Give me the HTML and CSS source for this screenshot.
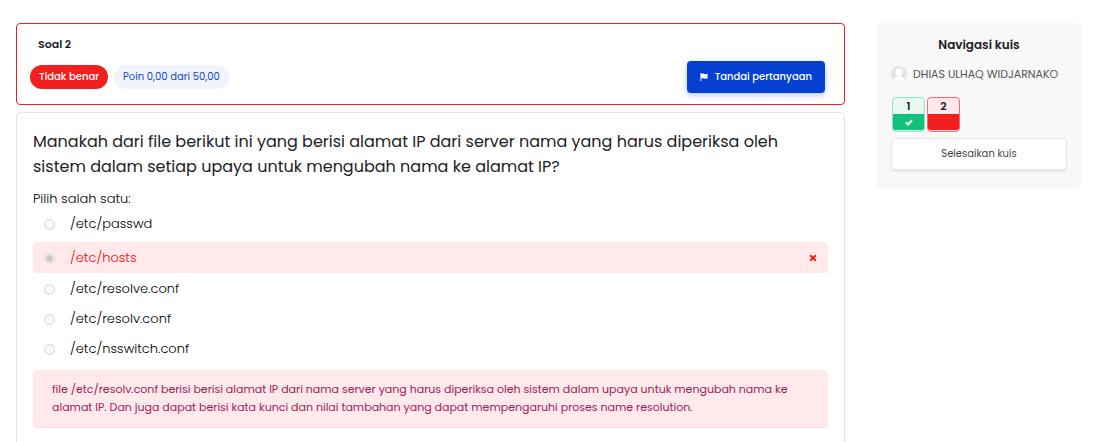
FILE: index.html
```html
<!DOCTYPE html>
<html lang="id">
<head>
<meta charset="utf-8">
<meta name="viewport" content="width=device-width, initial-scale=1">
<title>Soal 2</title>
<link rel="stylesheet" href="styles.css">
</head>
<body>
<div class="page">
  <main class="question">
    <section class="info">
      <h1 class="info-title">Soal 2</h1>
      <div class="info-row">
        <span class="badge badge-wrong">Tidak benar</span>
        <span class="badge badge-grade">Poin 0,00 dari 50,00</span>
        <button class="flag-button" type="button">
          <svg class="flag-icon" viewBox="0 0 9 9" aria-hidden="true"><path d="M.5 0h1v1C3 .2 4 .6 5 1s2 .4 3.500-.3V6C7 6.700 6 6.600 5 6.200S3 5.500 1.500 6.300V9h-1z"/></svg>
          <span>Tandai pertanyaan</span>
        </button>
      </div>
    </section>
    <section class="content">
      <p class="question-text">Manakah dari file berikut ini yang berisi alamat IP dari server nama yang harus diperiksa oleh sistem dalam setiap upaya untuk mengubah nama ke alamat IP?</p>
      <fieldset class="answers">
        <legend class="prompt">Pilih salah satu:</legend>
        <div class="answer"><input class="radio" type="radio" name="answer" id="a1" disabled><label for="a1">/etc/passwd</label></div>
        <div class="answer answer-wrong"><input class="radio" type="radio" name="answer" id="a2" checked disabled><label for="a2">/etc/hosts</label>
          <svg class="cross-icon" viewBox="0 0 8 8" role="img" aria-label="Salah"><path d="M1.200 1.200l5.600 5.600M6.800 1.200L1.200 6.800"/></svg></div>
        <div class="answer"><input class="radio" type="radio" name="answer" id="a3" disabled><label for="a3">/etc/resolve.conf</label></div>
        <div class="answer"><input class="radio" type="radio" name="answer" id="a4" disabled><label for="a4">/etc/resolv.conf</label></div>
        <div class="answer"><input class="radio" type="radio" name="answer" id="a5" disabled><label for="a5">/etc/nsswitch.conf</label></div>
      </fieldset>
      <p class="feedback">file /etc/resolv.conf berisi berisi alamat IP dari nama server yang harus diperiksa oleh sistem dalam upaya untuk mengubah nama ke alamat IP. Dan juga dapat berisi kata kunci dan nilai tambahan yang dapat mempengaruhi proses name resolution.</p>
    </section>
  </main>
  <aside class="sidebar">
    <h2 class="sidebar-title">Navigasi kuis</h2>
    <div class="user">
      <svg class="avatar" viewBox="0 0 16 16" aria-hidden="true"><circle cx="8" cy="8" r="8" fill="#e3e3e3"/><path fill="#fff" d="M8 2.500c2.300 0 3.600 1.500 3.500 3.700-.1 1.600-.8 2.800-1.600 3.400v.9c1.500.5 3 1 3.800 2.300A8 8 0 0 1 8 16a8 8 0 0 1-5.700-3.200c.8-1.300 2.300-1.800 3.800-2.300V9.600C5.300 9 4.600 7.800 4.500 6.200 4.400 4 5.700 2.500 8 2.500z"/></svg>
      <span>DHIAS ULHAQ WIDJARNAKO</span>
    </div>
    <nav class="quiz-nav" aria-label="Navigasi kuis">
      <a class="nav-item nav-correct" href="#s1"><span class="nav-number">1</span><span class="nav-state"><svg class="check-icon" viewBox="0 0 8 7" aria-hidden="true"><path d="M1 3.500l2 2L7 1.300"/></svg></span></a>
      <a class="nav-item nav-wrong" href="#s2"><span class="nav-number">2</span><span class="nav-state"></span></a>
    </nav>
    <button class="finish-button" type="button">Selesaikan kuis</button>
  </aside>
</div>
</body>
</html>
```

FILE: styles.css
```css
* { box-sizing: border-box; }

body {
  margin: 0;
  background: #fff;
  color: #1d2125;
  font-family: Poppins, Inter, "Open Sans", sans-serif;
}

h1, h2, p { margin: 0; }

.page {
  display: flex;
  align-items: flex-start;
  gap: 32px;
  min-height: 100vh;
  padding: 23px 17px 0 16px;
}

.question {
  display: flex;
  flex: 1;
  flex-direction: column;
  align-self: stretch;
  gap: 7px;
  min-width: 0;
}

.info {
  padding: 12px 19px 11px 13px;
  border: 1px solid #f01e1e;
  border-radius: 4px;
}

.info-title {
  padding-left: 8px;
  font-size: 11px;
  font-weight: 600;
  line-height: 16px;
}

.info-row {
  display: flex;
  align-items: center;
  gap: 6px;
  margin-top: 9px;
}

.badge {
  padding: 0 9px;
  border-radius: 12px;
  font-size: 10px;
  font-weight: 500;
  line-height: 24px;
}

.badge-wrong { background: #f21f1f; color: #fff; }
.badge-grade { background: #eff4ff; color: #1746cf; font-weight: 400; }

.flag-button {
  display: flex;
  align-items: center;
  gap: 7px;
  height: 32px;
  margin-left: auto;
  padding: 0 13px;
  border: 0;
  border-radius: 4px;
  background: #0540d0;
  box-shadow: 0 2px 6px rgba(5, 64, 208, .3);
  color: #fff;
  font: 500 10px/16px Poppins, Inter, sans-serif;
}

.flag-icon { width: 8px; height: 8px; fill: #fff; }

.content {
  flex: 1;
  padding: 16px 16px 14px;
  border: 1px solid #e6e6e6;
  border-bottom: 0;
  border-radius: 4px 4px 0 0;
}

.question-text {
  font-size: 16px;
  line-height: 25px;
}

.answers {
  min-width: 0;
  margin: 10px 0 0;
  padding: 0;
  border: 0;
  color: #000;
  font-weight: 300;
}

.prompt {
  padding: 0;
  font-size: 13px;
  line-height: 20px;
}

.answer {
  display: flex;
  align-items: center;
  height: 30px;
  padding: 0 11px;
  border-radius: 4px;
  font-size: 13px;
  line-height: 20px;
}

.answer-wrong {
  height: 31px;
  margin: 3px 0 1px;
  background: #ffe9ea;
  color: #f50c0c;
}

.radio {
  display: grid;
  place-items: center;
  width: 11px;
  height: 11px;
  margin: 1px 15px 0 0;
  border: 1px solid #d5d5d5;
  border-radius: 50%;
  background: #f8f8f8;
  appearance: none;
}

.radio:checked::before {
  width: 7px;
  height: 7px;
  border-radius: 50%;
  background: #cbc8c8;
  content: "";
}

.cross-icon {
  width: 8px;
  height: 8px;
  margin-left: auto;
  fill: none;
  stroke: #f02020;
  stroke-width: 2;
}

.feedback {
  margin-top: 6px;
  padding: 10px 19px 11px;
  border-bottom: 1px solid #fbdce1;
  border-radius: 4px;
  background: #ffe9ea;
  color: #a02058;
  font-size: 11px;
  line-height: 18px;
}

.sidebar {
  flex: 0 0 204px;
  padding: 14px 14px 19px;
  border-radius: 4px;
  background: #f8f8f8;
}

.sidebar-title {
  font-size: 12px;
  font-weight: 600;
  line-height: 16px;
  text-align: center;
}

.user {
  display: flex;
  align-items: center;
  gap: 6px;
  margin-top: 13px;
  color: #555;
  font-size: 11px;
  line-height: 16px;
  white-space: nowrap;
}

.avatar { flex: none; width: 16px; height: 16px; }

.quiz-nav {
  display: flex;
  gap: 2px;
  margin-top: 15px;
  padding-left: 1px;
}

.nav-item {
  display: flex;
  flex-direction: column;
  width: 33px;
  height: 35px;
  padding-bottom: 1px;
  border: 1px solid;
  border-radius: 4px;
  color: #1d2125;
  font-size: 11px;
  font-weight: 600;
  line-height: 16px;
  text-align: center;
  text-decoration: none;
}

.nav-correct { border-color: #90e5c2; background: #e8f9f1; }
.nav-wrong { border-color: #f56a75; background: #ffe9ea; }

.nav-state {
  display: grid;
  flex: 1;
  place-items: center;
  border-radius: 0 0 2px 2px;
}

.nav-correct .nav-state { background: #12c27a; }
.nav-wrong .nav-state { background: #f21f1f; }

.check-icon {
  width: 8px;
  height: 7px;
  fill: none;
  stroke: #fff;
  stroke-width: 2;
}

.finish-button {
  display: block;
  width: 100%;
  height: 32px;
  margin-top: 6px;
  border: 1px solid #e3e7f0;
  border-radius: 4px;
  background: #fff;
  box-shadow: 0 2px 1px rgba(0, 0, 0, .06);
  color: #444;
  font: 400 10px/16px Poppins, Inter, sans-serif;
}
```
